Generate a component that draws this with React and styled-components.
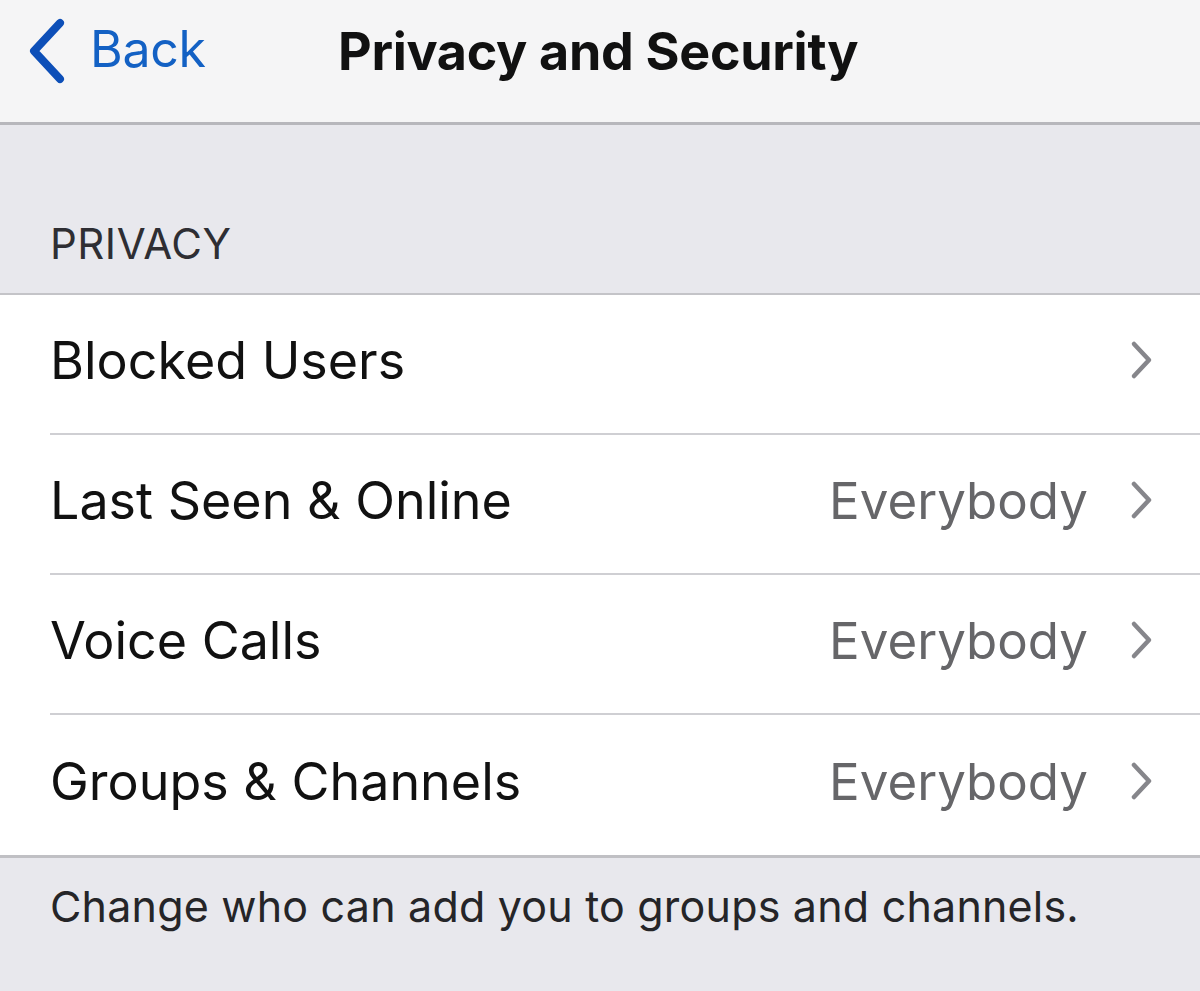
import React from 'react'
import styled, { createGlobalStyle } from 'styled-components'

const Global = createGlobalStyle`
  html, body {
    margin: 0;
    padding: 0;
    background: #e8e8ed;
    font-family: Inter, "Noto Sans", "Liberation Sans", sans-serif;
    -webkit-font-smoothing: antialiased;
  }
`

const rows = [
  { label: 'Blocked Users' },
  { label: 'Last Seen & Online', value: 'Everybody' },
  { label: 'Voice Calls', value: 'Everybody' },
  { label: 'Groups & Channels', value: 'Everybody' },
]

const App = () => {
  return (
    <Screen>
      <Global />
      <NavBar>
        <BackButton>
          <svg width="44" height="68" viewBox="0 0 44 68">
            <path d="M36 6 L10 34 L36 62" fill="none" stroke="#0d4fb8" strokeWidth="8" strokeLinecap="round" strokeLinejoin="round" />
          </svg>
          <span>Back</span>
        </BackButton>
        <Title>Privacy and Security</Title>
        <Spacer />
      </NavBar>
      <SectionHeader>PRIVACY</SectionHeader>
      <Group>
        {rows.map((r, i) => (
          <Row key={r.label} last={i === rows.length - 1}>
            <Label>{r.label}</Label>
            <Right>
              {r.value && <Value>{r.value}</Value>}
              <Chevron width="24" height="40" viewBox="0 0 24 40">
                <path d="M4 4 L19 20 L4 36" fill="none" stroke="#86868b" strokeWidth="4.5" strokeLinecap="round" strokeLinejoin="round" />
              </Chevron>
            </Right>
          </Row>
        ))}
      </Group>
      <Footer>Change who can add you to groups and channels.</Footer>
    </Screen>
  )
}

export default App

const Screen = styled.div`
  width: 1200px;
  min-height: 991px;
  background: #e8e8ed;
  overflow: hidden;
`

const NavBar = styled.div`
  height: 125px;
  box-sizing: border-box;
  background: #f5f5f6;
  border-bottom: 3px solid #b7b7bc;
  display: flex;
  align-items: center;
  padding: 0 0 20px 24px;
`

const BackButton = styled.div`
  display: flex;
  align-items: center;
  gap: 22px;
  color: #1361c4;
  font-size: 50px;
  letter-spacing: -0.3px;
  width: 290px;
  span {
    margin-top: -4px;
  }
`

const Title = styled.div`
  font-size: 52px;
  font-weight: 700;
  color: #111;
  letter-spacing: -0.3px;
  margin-left: 24px;
`

const Spacer = styled.div`
  flex: 1;
`

const SectionHeader = styled.div`
  height: 170px;
  box-sizing: border-box;
  display: flex;
  align-items: flex-end;
  padding: 0 0 24px 50px;
  font-size: 42px;
  color: #2e2e33;
  letter-spacing: 0.5px;
  border-bottom: 2px solid #c4c4c8;
`

const Group = styled.div`
  background: #fff;
  border-bottom: 3px solid #c0c0c4;
`

const Row = styled.div`
  height: 140px;
  box-sizing: border-box;
  margin-left: 50px;
  padding-right: 46px;
  display: flex;
  align-items: center;
  justify-content: space-between;
  border-bottom: ${p => (p.last ? 'none' : '2px solid #cfcfd3')};
`

const Label = styled.div`
  font-size: 52px;
  color: #111;
  letter-spacing: 0;
  margin-top: -8px;
`

const Right = styled.div`
  display: flex;
  align-items: center;
  gap: 42px;
  margin-top: -8px;
`

const Value = styled.div`
  font-size: 51px;
  color: #666669;
  letter-spacing: 0;
`

const Chevron = styled.svg`
  display: block;
`

const Footer = styled.div`
  padding: 22px 0 0 50px;
  font-size: 43px;
  color: #252528;
  letter-spacing: 0.2px;
`
